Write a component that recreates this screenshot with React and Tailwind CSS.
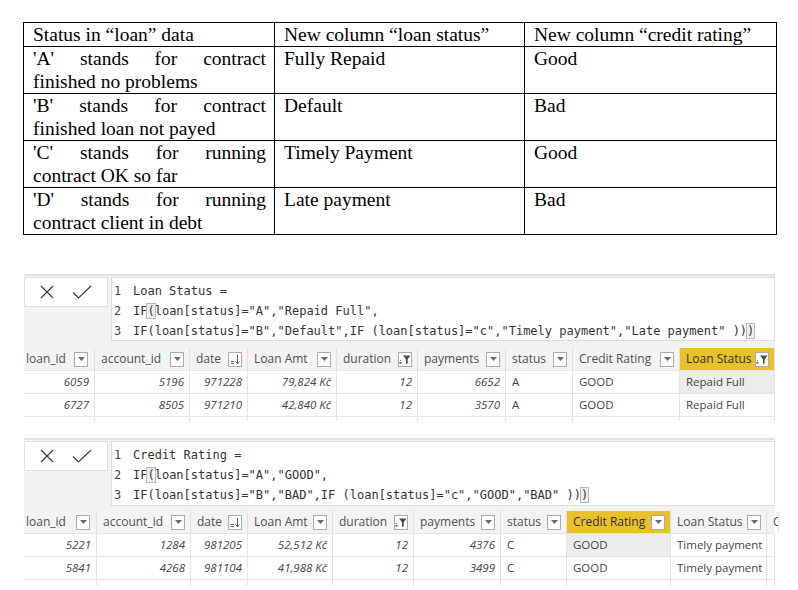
import React from "react";

const serif = "font-['Liberation_Serif',_'Times_New_Roman',_serif]";

const topRows = [
  ["'A' stands for contract", "finished no problems", "Fully Repaid", "Good"],
  ["'B' stands for contract", "finished loan not payed", "Default", "Bad"],
  ["'C' stands for running", "contract OK so far", "Timely Payment", "Good"],
  ["'D' stands for running", "contract client in debt", "Late payment", "Bad"],
];

function XIcon() {
  return (
    <svg width="14" height="14" viewBox="0 0 14 14">
      <path d="M1 1L13 13M13 1L1 13" stroke="#3a3a3a" strokeWidth="1.2" fill="none" />
    </svg>
  );
}
function CheckIcon() {
  return (
    <svg width="20" height="14" viewBox="0 0 20 14">
      <path d="M1 7.5L6.5 13L19 1" stroke="#3a3a3a" strokeWidth="1.2" fill="none" />
    </svg>
  );
}
function Caret() {
  return (
    <svg width="7" height="4" viewBox="0 0 7 4">
      <path d="M0 0h7L3.5 4z" fill="#6a6a6a" />
    </svg>
  );
}
function SortIcon() {
  return (
    <svg width="11" height="11" viewBox="0 0 11 11">
      <path d="M1 7.5h3M1 9.5h3" stroke="#666" strokeWidth="1" />
      <path d="M7.5 1v8.5M5.5 7.5l2 2.3 2-2.3" stroke="#555" strokeWidth="1" fill="none" />
    </svg>
  );
}
function FilterIcon() {
  return (
    <svg width="12" height="11" viewBox="0 0 12 11">
      <path d="M4 1.5h7.5L8.7 5.2v4L7 10V5.2z" fill="#4a4a4a" />
      <path d="M1.5 6v3.5" stroke="#777" strokeWidth="1" strokeDasharray="1 1" />
      <path d="M0.3 8.3l1.2 1.6 1.2-1.6" stroke="#666" strokeWidth="1" fill="none" />
    </svg>
  );
}

function Btn({ kind }) {
  return (
    <span className="w-[14px] h-[15px] shrink-0 border border-[#ababab] bg-white flex items-center justify-center">
      {kind === "sort" ? <SortIcon /> : kind === "filter" ? <FilterIcon /> : <Caret />}
    </span>
  );
}

function Box({ children }) {
  return (
    <span className="outline outline-1 outline-[#b9b9b9] bg-[#f1f1f1]">{children}</span>
  );
}

function Block({ wrap, formulaH, lines, cols, rows, partialH }) {
  return (
    <div className={wrap}>
      <div className={"bg-[#f2f2f2] border-t-2 border-[#e1e1e1] pt-[1px] flex gap-[3px] items-start " + (formulaH === 64 ? "pb-[7px]" : "pb-[5px]")}>
        <div className="w-[84px] h-[30px] shrink-0 bg-white border border-[#e0e0e0] flex items-center justify-center gap-[18px]">
          <XIcon />
          <CheckIcon />
        </div>
        <div className={"flex-1 bg-white border border-[#dcdcdc] pt-[3px] pl-[2px] font-['DejaVu_Sans_Mono',_monospace] text-[12px] leading-[20px] text-[#333] " + (formulaH === 64 ? "h-[64px]" : "h-[65px]")}>
          {lines.map((l, i) => (
            <div key={i} className="flex whitespace-pre">
              <span className="w-[19px] text-[#444]">{i + 1}</span>
              <span>{l}</span>
            </div>
          ))}
        </div>
      </div>
      <div className="flex h-[23px] bg-[#f3f3f3] font-['Open_Sans',_sans-serif] text-[12px] border-b border-[#e4e4e4]">
        {cols.map((c, i) => (
          <div
            key={i}
            className={
              c.w +
              " shrink-0 flex items-center justify-between overflow-hidden border-r border-[#e0e0e0] " +
              (i === 0 ? "pl-[2px] pr-[6px] " : "pl-[6px] pr-[5px] ") +
              (c.hi ? "bg-[#e9c12a] text-[#333]" : "text-[#505050]")
            }
          >
            <span className="whitespace-nowrap">{c.name}</span>
            {c.btn && <Btn kind={c.btn} />}
          </div>
        ))}
      </div>
      {rows.map((r, ri) => (
        <div key={ri} className="flex h-[23px] bg-white border-b border-[#e6e6e6] font-['Open_Sans',_sans-serif] text-[11.5px] text-[#444]">
          {cols.map((c, i) => (
            <div
              key={i}
              className={
                c.w +
                " shrink-0 flex items-center overflow-hidden border-r border-[#e4e4e4] whitespace-nowrap " +
                (c.num ? "justify-end pr-[5px] italic " : "pl-[6px] ") +
                (c.hi && ri === 0 ? "bg-[#ececec]" : "")
              }
            >
              {r[i]}
            </div>
          ))}
        </div>
      ))}
      <div className={"flex bg-white " + partialH}>
        {cols.map((c, i) => (
          <div key={i} className={c.w + " shrink-0 border-r border-[#e4e4e4]"} />
        ))}
      </div>
    </div>
  );
}

const cols1 = [
  { name: "loan_id", w: "w-[71px]", btn: "caret", num: true },
  { name: "account_id", w: "w-[95px]", btn: "caret", num: true },
  { name: "date", w: "w-[58px]", btn: "sort", num: true },
  { name: "Loan Amt", w: "w-[89px]", btn: "caret", num: true },
  { name: "duration", w: "w-[81px]", btn: "filter", num: true },
  { name: "payments", w: "w-[88px]", btn: "caret", num: true },
  { name: "status", w: "w-[67px]", btn: "caret" },
  { name: "Credit Rating", w: "w-[107px]", btn: "caret" },
  { name: "Loan Status", w: "w-[95px]", btn: "filter", hi: true },
];

const cols2 = [
  { name: "loan_id", w: "w-[73px]", btn: "caret", num: true },
  { name: "account_id", w: "w-[94px]", btn: "caret", num: true },
  { name: "date", w: "w-[57px]", btn: "sort", num: true },
  { name: "Loan Amt", w: "w-[85px]", btn: "caret", num: true },
  { name: "duration", w: "w-[81px]", btn: "filter", num: true },
  { name: "payments", w: "w-[87px]", btn: "caret", num: true },
  { name: "status", w: "w-[66px]", btn: "caret" },
  { name: "Credit Rating", w: "w-[104px]", btn: "caret", hi: true },
  { name: "Loan Status", w: "w-[96px]", btn: "caret" },
  { name: "C", w: "w-[8px]" },
];

const lines1 = [
  "Loan Status =",
  <>IF<Box>(</Box>loan[status]="A","Repaid Full",</>,
  <>IF(loan[status]="B","Default",IF (loan[status]="c","Timely payment","Late payment" ))<Box>)</Box></>,
];
const lines2 = [
  "Credit Rating =",
  <>IF<Box>(</Box>loan[status]="A","GOOD",</>,
  <>IF(loan[status]="B","BAD",IF (loan[status]="c","GOOD","BAD" ))<Box>)</Box></>,
];

const rows1 = [
  ["6059", "5196", "971228", "79,824 Kč", "12", "6652", "A", "GOOD", "Repaid Full"],
  ["6727", "8505", "971210", "42,840 Kč", "12", "3570", "A", "GOOD", "Repaid Full"],
];
const rows2 = [
  ["5221", "1284", "981205", "52,512 Kč", "12", "4376", "C", "GOOD", "Timely payment", ""],
  ["5841", "4268", "981104", "41,988 Kč", "12", "3499", "C", "GOOD", "Timely payment", ""],
];

export default function App() {
  return (
    <div className="w-[798px] h-[590px] bg-white overflow-hidden pt-[22px]">
      <table className={"ml-[23px] w-[753px] table-fixed border-collapse text-black text-[19.5px] leading-[23px] " + serif}>
        <colgroup>
          <col className="w-[251px]" />
          <col className="w-[250px]" />
          <col className="w-[252px]" />
        </colgroup>
        <tbody>
          <tr>
            <td className="border border-black pl-[9px] pr-[8px] align-top">Status in “loan” data</td>
            <td className="border border-black pl-[9px] pr-[8px] align-top">New column “loan status”</td>
            <td className="border border-black pl-[9px] pr-[8px] align-top">New column “credit rating”</td>
          </tr>
          {topRows.map((r, i) => (
            <tr key={i}>
              <td className="border border-black pl-[9px] pr-[8px] align-top">
                <div className="text-justify [text-align-last:justify]">{r[0]}</div>
                <div>{r[1]}</div>
              </td>
              <td className="border border-black pl-[9px] pr-[8px] align-top h-[46px]">{r[2]}</td>
              <td className="border border-black pl-[9px] pr-[8px] align-top">{r[3]}</td>
            </tr>
          ))}
        </tbody>
      </table>
      <Block wrap="ml-[24px] w-[751px] mt-[39px]" formulaH={64} lines={lines1} cols={cols1} rows={rows1} partialH="h-[4px]" />
      <Block wrap="ml-[24px] w-[751px] mt-[17px]" formulaH={65} lines={lines2} cols={cols2} rows={rows2} partialH="h-[6px]" />
    </div>
  );
}
